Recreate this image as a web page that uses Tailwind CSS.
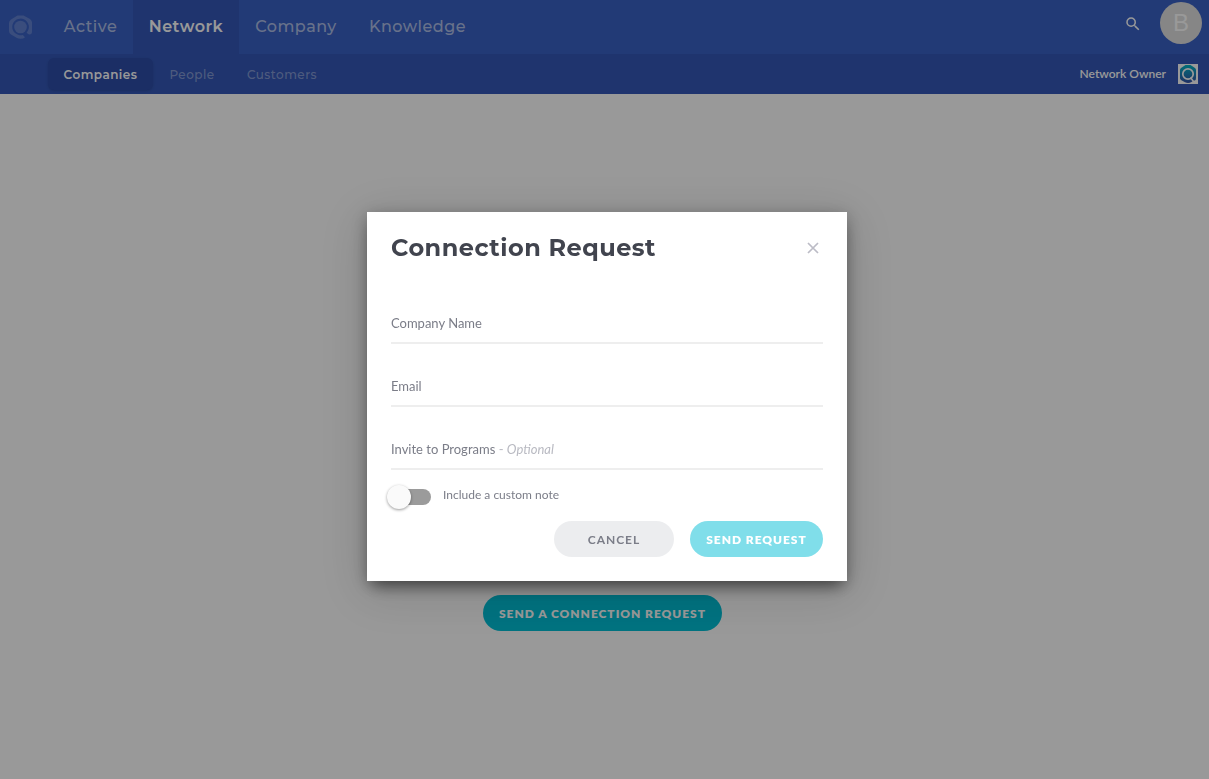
<!DOCTYPE html>
<html lang="en">
  <head>
    <meta charset="UTF-8" />
    <meta name="viewport" content="width=device-width, initial-scale=1.0" />
    <title>Network - Companies</title>
    <script src="https://cdn.jsdelivr.net/npm/@tailwindcss/browser@4"></script>
  </head>
  <body class="min-h-screen bg-white font-['Lato',sans-serif]">
    <header class="text-white">
      <!-- main navigation -->
      <div class="flex h-[54px] justify-between bg-[#3a62c5]">
        <div class="flex">
          <a href="#" aria-label="Home" class="flex w-12 items-center pl-2 text-white/20">
            <svg class="h-[26px] w-[26px]" viewBox="0 0 26 26" fill="currentColor">
              <path d="M9.500 1.500 H15.500 L22 5 Q24 6.500 24 8.500 V17.500 Q24 20.500 21.500 20.500 Q20 20.500 18.600 18.600 A8.300 8.300 0 1 0 14.800 20.900 L17 23.300 Q15.500 24.800 12.500 24.800 Q10.500 24.800 9 24 L3 20.500 Q1 19 1 17 V9 Q1 7 3 5.500 Z" />
              <circle cx="12.500" cy="13" r="6.300" />
            </svg>
          </a>
          <nav class="flex font-['Montserrat',sans-serif] text-base font-medium tracking-[0.03em] text-white/60">
            <a href="#" class="flex w-[85px] items-center justify-center">Active</a>
            <a href="#" class="flex w-[106px] items-center justify-center bg-[#3458b7] font-semibold text-white">Network</a>
            <a href="#" class="flex w-[114px] items-center justify-center">Company</a>
            <a href="#" class="flex w-[129px] items-center justify-center">Knowledge</a>
          </nav>
        </div>
        <div class="flex items-start gap-[15px] pt-0.5 pr-[7px]">
          <button type="button" aria-label="Search" class="flex h-11 w-6 items-center justify-center text-white">
            <svg class="h-[18px] w-[18px]" viewBox="0 0 24 24" fill="currentColor">
              <path d="M15.5 14h-.79l-.28-.27A6.471 6.471 0 0 0 16 9.500 6.500 6.500 0 1 0 9.500 16c1.610 0 3.090-.59 4.230-1.570l.27.28v.79l5 4.990L20.490 19l-4.990-5zm-6 0C7.010 14 5 11.990 5 9.500S7.010 5 9.500 5 14 7.010 14 9.500 11.990 14 9.500 14z" />
            </svg>
          </button>
          <button type="button" class="flex h-[42px] w-[42px] items-center justify-center rounded-full bg-[#e0e0e0] font-['Liberation_Sans',sans-serif] text-2xl text-white">B</button>
        </div>
      </div>
      <!-- sub navigation -->
      <div class="flex h-10 items-center justify-between bg-[#3458b7] pr-[11px] pl-12">
        <nav class="flex h-8 font-['Montserrat',sans-serif] text-xs font-medium tracking-[0.04em] text-white/40">
          <a href="#" class="flex w-[105px] items-center justify-center rounded-md bg-[#2d4da9] pt-px font-semibold text-white shadow-sm">Companies</a>
          <a href="#" class="flex w-[78px] items-center justify-center pt-px">People</a>
          <a href="#" class="flex w-[102px] items-center justify-center pt-px">Customers</a>
        </nav>
        <a href="#" class="flex items-center gap-3 text-xs font-semibold">
          Network Owner
          <svg class="h-5 w-5" viewBox="0 0 20 20" fill="none">
            <defs>
              <linearGradient id="q" x1="0" y1="0" x2="0" y2="1">
                <stop offset="0" stop-color="#00b8c8" />
                <stop offset="1" stop-color="#3650a8" />
              </linearGradient>
            </defs>
            <rect width="20" height="20" fill="#fff" />
            <path d="M7.500 1 H12.500 L17 4 Q18 5 18 6 V14 Q18 16.500 16.500 16.500 L15 17 L13.500 18 Q12 19 10 19 Q8.500 19 7 18.300 L3 16 Q2 15 2 14 V6 Q2 5 3 4 Z" fill="url(#q)" />
            <circle cx="10" cy="10" r="5.200" stroke="#fff" stroke-width="1.700" />
            <path d="M12.500 13.500 L15.500 17.500" stroke="#fff" stroke-width="1.500" />
          </svg>
        </a>
      </div>
    </header>

    <main class="flex justify-center pt-[501px] pr-1">
      <button type="button" class="h-9 w-[239px] rounded-full bg-[#00bfd6] pt-0.5 text-xs font-extrabold tracking-[0.08em] text-white">SEND A CONNECTION REQUEST</button>
    </main>

    <!-- modal -->
    <div class="fixed inset-0 flex items-center justify-center bg-black/40 pt-3.5 pl-[5px]">
      <form role="dialog" aria-labelledby="dialog-title" class="w-[480px] bg-white px-6 pb-6 text-[#7b7d88] shadow-[0_11px_15px_-7px_rgba(0,0,0,0.4),0_9px_46px_8px_rgba(0,0,0,0.12),0_4px_16px_rgba(0,0,0,0.3)]">
        <div class="flex h-[72px] items-center justify-between">
          <h2 id="dialog-title" class="font-['Montserrat',sans-serif] text-2xl font-bold tracking-[0.02em] text-[#41444e]">Connection Request</h2>
          <button type="button" aria-label="Close" class="flex h-5 w-5 items-center justify-center text-[#bcbcc6]">
            <svg class="h-3 w-3" viewBox="0 0 12 12" stroke="currentColor" stroke-width="1.700">
              <path d="M1 1 L11 11 M11 1 L1 11" />
            </svg>
          </button>
        </div>
        <div class="mt-[18px] flex flex-col gap-[21px] text-[13px]">
          <div class="flex h-[42px] items-center border-b-2 border-[#eeeeee] pt-[3px]">
            <label for="company">Company Name</label>
            <input id="company" type="text" class="ml-2 min-w-0 flex-1 outline-none" />
          </div>
          <div class="flex h-[42px] items-center border-b-2 border-[#eeeeee] pt-[3px]">
            <label for="email">Email</label>
            <input id="email" type="email" class="ml-2 min-w-0 flex-1 outline-none" />
          </div>
          <div class="flex h-[42px] items-center border-b-2 border-[#eeeeee] pt-[3px]">
            <label for="programs">Invite to Programs <span class="text-[#b9bac2]">- <i>Optional</i></span></label>
            <input id="programs" type="text" class="ml-2 min-w-0 flex-1 outline-none" />
          </div>
        </div>
        <div class="mt-[15px] -ml-1 flex h-6 items-start gap-3">
          <input
            id="note"
            type="checkbox"
            class="relative h-6 w-11 appearance-none before:absolute before:top-1 before:right-0 before:h-4 before:w-9 before:rounded-full before:bg-[#9b9b9b] after:absolute after:top-0 after:left-0 after:h-6 after:w-6 after:rounded-full after:bg-[#fafafa] after:shadow-[0_1px_3px_rgba(0,0,0,0.4)] checked:after:left-5"
          />
          <label for="note" class="text-xs leading-5">Include a custom note</label>
        </div>
        <div class="mt-3 flex justify-end gap-4 text-xs font-bold tracking-[0.08em]">
          <button type="button" class="h-9 w-[120px] rounded-full bg-[#ecedef] pt-0.5">CANCEL</button>
          <button type="submit" class="h-9 w-[133px] rounded-full bg-[#80deea] pt-0.5 font-extrabold text-white">SEND REQUEST</button>
        </div>
      </form>
    </div>
  </body>
</html>
